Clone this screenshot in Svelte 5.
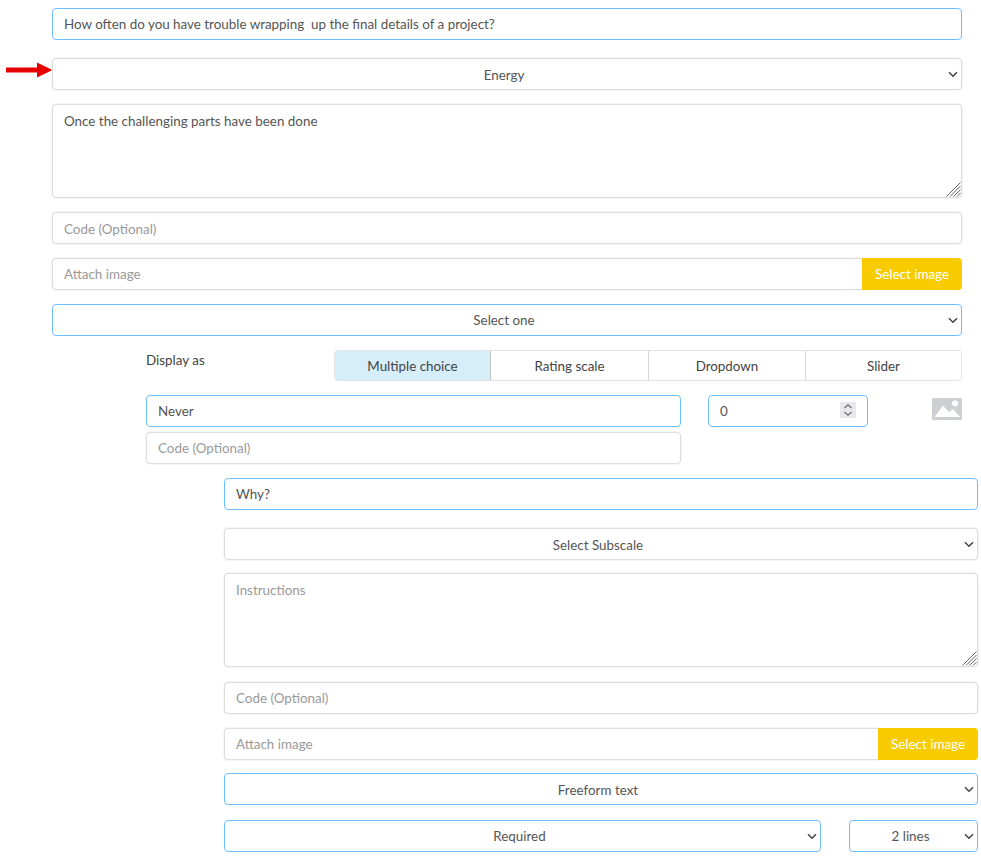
<script>
</script>

<div class="page">
  <svg class="arrow" width="47" height="16" viewBox="0 0 47 16" aria-hidden="true">
    <path d="M0 5.5H31V0.5L46.5 8L31 15.5V10.5H0Z" fill="#e60000" />
  </svg>

  <div class="stack main">
    <input class="f on g18" value="How often do you have trouble wrapping  up the final details of a project?" />
    <div class="sel g14">
      <select class="f low"><option>Energy</option></select>
      {@render chev()}
    </div>
    <div class="ta g14">
      <textarea class="f tall">Once the challenging parts have been done</textarea>
      {@render grip()}
    </div>
    <input class="f low g14" placeholder="Code (Optional)" />
    <div class="group g14">
      <input class="f" placeholder="Attach image" />
      <button class="pick">Select image</button>
    </div>
    <div class="sel g14">
      <select class="f on"><option>Select one</option></select>
      {@render chev()}
    </div>
  </div>

  <div class="answer">
    <div class="display">
      <span class="lab">Display as</span>
      <div class="tabs">
        <button class="active">Multiple choice</button>
        <button class="second">Rating scale</button>
        <button>Dropdown</button>
        <button>Slider</button>
      </div>
    </div>
    <div class="opt">
      <div class="optL">
        <input class="f on" value="Never" />
        <input class="f" placeholder="Code (Optional)" />
      </div>
      <div class="num">
        <input class="f on" value="0" />
        <span class="spin">
          <svg width="10" height="14" viewBox="0 0 10 14" fill="none" stroke="#6b6b70" stroke-width="1.2">
            <path d="M1.5 5L5 1.8L8.5 5M1.5 9L5 12.2L8.5 9" />
          </svg>
        </span>
      </div>
      <svg class="pic" width="30" height="22" viewBox="0 0 30 22" aria-hidden="true">
        <path fill="#cdcfd3" d="M1 0H29a1 1 0 0 1 1 1V21a1 1 0 0 1-1 1H1a1 1 0 0 1-1-1V1a1 1 0 0 1 1-1Z" />
        <path fill="#fff" d="M2.5 19L11 7.5L17 14L21 11L28 19Z" />
        <circle cx="23" cy="5.5" r="3" fill="#fff" />
      </svg>
    </div>
  </div>

  <div class="stack sub">
    <input class="f on g18" value="Why?" />
    <div class="sel g13">
      <select class="f low"><option>Select Subscale</option></select>
      {@render chev()}
    </div>
    <div class="ta g15">
      <textarea class="f tall" placeholder="Instructions"></textarea>
      {@render grip()}
    </div>
    <input class="f g14" placeholder="Code (Optional)" />
    <div class="group g13">
      <input class="f" placeholder="Attach image" />
      <button class="pick">Select image</button>
    </div>
    <div class="sel g15">
      <select class="f on low"><option>Freeform text</option></select>
      {@render chev()}
    </div>
    <div class="pair">
      <div class="sel grow">
        <select class="f on"><option>Required</option></select>
        {@render chev()}
      </div>
      <div class="sel lines">
        <select class="f on"><option>2 lines</option></select>
        {@render chev()}
      </div>
    </div>
  </div>
</div>

{#snippet chev()}
  <svg class="chev" width="10" height="7" viewBox="0 0 10 7" fill="none" stroke="#444" stroke-width="1.5" aria-hidden="true">
    <path d="M1 1.2L5 5.2L9 1.2" />
  </svg>
{/snippet}

{#snippet grip()}
  <svg class="grip" width="15" height="15" viewBox="0 0 15 15" fill="none" stroke="#666" stroke-width="1" aria-hidden="true">
    <path d="M0.5 14.5L14.5 0.5M4 14.5L14.5 4M7.5 14.5L14.5 7.5M11 14.5L14.5 11" />
  </svg>
{/snippet}

<style>
  :global(body) {
    margin: 0;
    background: #fff;
  }
  .page {
    position: relative;
    width: 981px;
    height: 861px;
    overflow: hidden;
    padding-top: 8px;
    box-sizing: border-box;
    font-family: Lato, sans-serif;
    font-size: 13.4px;
    color: #555;
  }
  .arrow {
    position: absolute;
    left: 6px;
    top: 62px;
  }
  .stack {
    display: flex;
    flex-direction: column;
  }
  .main {
    margin-left: 52px;
    width: 910px;
  }
  .sub {
    margin-left: 224px;
    width: 754px;
    margin-top: 14px;
  }
  .g18 { margin-bottom: 18px; }
  .g13 { margin-bottom: 13px; }
  .g14 { margin-bottom: 14px; }
  .g15 { margin-bottom: 15px; }
  .main > :last-child { margin-bottom: 0; }
  .f {
    display: block;
    width: 100%;
    height: 32px;
    box-sizing: border-box;
    border: 1px solid #ddd;
    box-shadow: 0 0 0 0.5px #eee;
    border-radius: 4px;
    padding: 0 11px 1px;
    font: inherit;
    color: #555;
    background: #fff;
    outline: none;
  }
  .f.on {
    border-color: #6cbfff;
    box-shadow: none;
  }
  .f::placeholder {
    color: #999;
    opacity: 1;
  }
  select.f {
    appearance: none;
    text-align: center;
    text-align-last: center;
    padding-right: 17px;
  }
  .f.low {
    padding-top: 1px;
    padding-bottom: 0;
  }
  .sel {
    position: relative;
  }
  .chev {
    position: absolute;
    right: 4px;
    top: 13px;
    pointer-events: none;
  }
  .ta {
    position: relative;
    height: 94px;
  }
  .tall {
    height: 94px;
    padding: 7px 11px;
    line-height: 18px;
    resize: none;
  }
  .grip {
    position: absolute;
    right: 1px;
    bottom: 1px;
    pointer-events: none;
  }
  .group {
    display: flex;
  }
  .group .f {
    flex: 1;
    border-right: 0;
    border-radius: 4px 0 0 4px;
  }
  .pick {
    width: 100px;
    height: 32px;
    flex: none;
    border: 0;
    padding: 0 0 1px;
    border-radius: 0 4px 4px 0;
    background: #f8cb00;
    color: #fff;
    font: inherit;
  }
  .answer {
    margin: 14px 0 0 146px;
    width: 816px;
  }
  .display {
    display: flex;
    justify-content: space-between;
  }
  .lab {
    line-height: 20px;
    color: #444;
  }
  .tabs {
    display: grid;
    grid-template-columns: 156px 157px 157px 156px;
    width: 628px;
    height: 31px;
    box-sizing: border-box;
    border: 1px solid #e3e3e3;
    border-radius: 4px;
    overflow: hidden;
  }
  .tabs button {
    border: 0;
    border-left: 1px solid #d8d8d8;
    background: #fff;
    font: inherit;
    color: #444;
    padding: 0;
  }
  .tabs button:first-child,
  .tabs .second {
    border-left: 0;
  }
  .tabs .active {
    background: #d6edfa;
    border-right: 1px solid #c4c4c4;
  }
  .opt {
    display: flex;
    align-items: flex-start;
    margin-top: 14px;
  }
  .optL {
    width: 535px;
    display: flex;
    flex-direction: column;
    gap: 5px;
  }
  .num {
    position: relative;
    width: 160px;
    margin-left: 27px;
  }
  .spin {
    position: absolute;
    right: 12px;
    top: 7px;
    width: 16px;
    height: 16px;
    display: flex;
    align-items: center;
    justify-content: center;
    background: #e8e8ec;
  }
  .pic {
    margin: 3px 0 0 64px;
  }
  .pair {
    display: flex;
    gap: 28px;
  }
  .grow {
    flex: 1;
  }
  .lines {
    width: 129px;
  }
</style>
